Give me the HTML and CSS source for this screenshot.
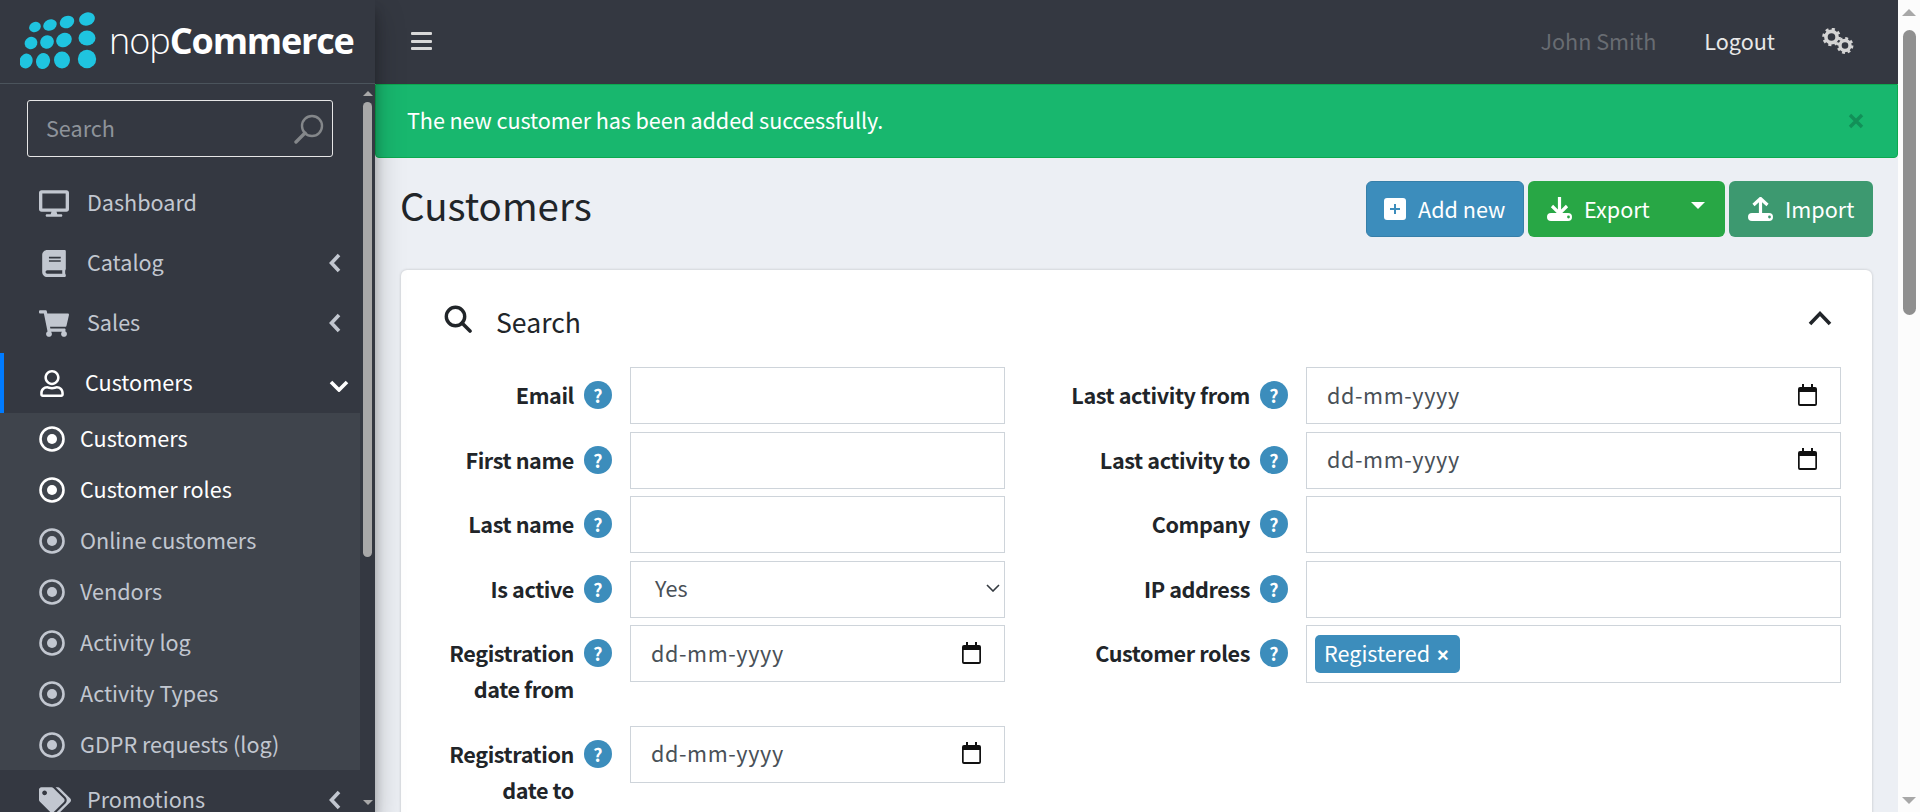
FILE: index.html
```html
<!DOCTYPE html>
<html lang="en">
<head>
    <meta charset="UTF-8">
    <title>Customers / nopCommerce administration</title>
    <link rel="stylesheet" href="styles.css">
</head>
<body>
    <div class="shell">
        <aside class="sidebar">
            <a class="logo">
                <svg class="logo-dots" viewBox="0 0 80 60" width="80" height="60">
                    <g fill="#1fc4e0">
                        <ellipse cx="15" cy="15" rx="6" ry="5" transform="rotate(-25 15 15)"/>
                        <ellipse cx="30" cy="13" rx="7" ry="5.5" transform="rotate(-25 30 13)"/>
                        <ellipse cx="47" cy="10" rx="7.5" ry="6" transform="rotate(-25 47 10)"/>
                        <ellipse cx="67" cy="7" rx="8" ry="6.5" transform="rotate(-20 67 7)"/>
                        <ellipse cx="11" cy="31" rx="6.5" ry="6" transform="rotate(-30 11 31)"/>
                        <ellipse cx="27" cy="30" rx="7" ry="6.5" transform="rotate(-30 27 30)"/>
                        <ellipse cx="44" cy="28" rx="8" ry="7" transform="rotate(-25 44 28)"/>
                        <ellipse cx="67" cy="26" rx="8.5" ry="7.5"/>
                        <ellipse cx="6" cy="49" rx="6.5" ry="7.5" transform="rotate(20 6 49)"/>
                        <ellipse cx="23" cy="49" rx="7" ry="8" transform="rotate(15 23 49)"/>
                        <ellipse cx="42" cy="48" rx="8" ry="8.5"/>
                        <circle cx="67" cy="47" r="9.2"/>
                    </g>
                </svg>
                <span class="logo-text"><span class="logo-light">nop</span><span class="logo-bold">Commerce</span></span>
            </a>
            <div class="sidebar-body">
                <nav class="sidebar-nav">
                    <div class="sidebar-search">
                        <input class="sidebar-input" placeholder="Search" />
                        <svg class="sidebar-lens" viewBox="0 0 30 30" width="30" height="30"><circle cx="18" cy="12" r="10" fill="none" stroke="currentColor" stroke-width="2.4"/><path d="M11 19 2 28" stroke="currentColor" stroke-width="3.4" stroke-linecap="round"/></svg>
                    </div>
                    <ul class="menu">
                        <li class="menu-item">
                            <svg class="menu-icon" viewBox="0 0 576 512"><path d="M528 0H48C21.5 0 0 21.5 0 48v320c0 26.5 21.5 48 48 48h192l-16 48h-72c-13.3 0-24 10.7-24 24s10.7 24 24 24h272c13.3 0 24-10.7 24-24s-10.7-24-24-24h-72l-16-48h192c26.5 0 48-21.5 48-48V48c0-26.5-21.5-48-48-48zm-16 352H64V64h448v288z"/></svg>
                            <span>Dashboard</span>
                        </li>
                        <li class="menu-item">
                            <svg class="menu-icon" viewBox="0 0 448 512"><path d="M448 360V24c0-13.3-10.7-24-24-24H96C43 0 0 43 0 96v320c0 53 43 96 96 96h328c13.3 0 24-10.7 24-24v-16c0-7.5-3.5-14.3-8.9-18.7-4.2-15.4-4.2-59.3 0-74.7 5.4-4.3 8.9-11.1 8.9-18.6zM128 134c0-3.3 2.7-6 6-6h212c3.3 0 6 2.7 6 6v20c0 3.3-2.7 6-6 6H134c-3.3 0-6-2.7-6-6v-20zm0 64c0-3.3 2.7-6 6-6h212c3.3 0 6 2.7 6 6v20c0 3.3-2.7 6-6 6H134c-3.3 0-6-2.7-6-6v-20zm253.4 250H96c-17.7 0-32-14.3-32-32 0-17.6 14.4-32 32-32h285.4c-1.9 17.1-1.9 46.9 0 64z"/></svg>
                            <span>Catalog</span>
                            <svg class="menu-angle" viewBox="0 0 12 20"><path d="M10 2 2.5 10 10 18"/></svg>
                        </li>
                        <li class="menu-item">
                            <svg class="menu-icon" viewBox="0 0 576 512"><path d="M528.12 301.319l47.273-208C578.806 78.301 567.391 64 551.99 64H159.208l-9.166-44.81C147.758 8.021 137.93 0 126.529 0H24C10.745 0 0 10.745 0 24v16c0 13.255 10.745 24 24 24h69.883l70.248 343.435C147.325 417.1 136 435.222 136 456c0 30.928 25.072 56 56 56s56-25.072 56-56c0-15.674-6.447-29.835-16.824-40h209.647C430.447 426.165 424 440.326 424 456c0 30.928 25.072 56 56 56s56-25.072 56-56c0-22.172-12.888-41.332-31.579-50.405l5.517-24.276c3.413-15.018-8.002-29.319-23.403-29.319H218.117l-6.545-32h293.145c11.206 0 20.92-7.754 23.403-18.681z"/></svg>
                            <span>Sales</span>
                            <svg class="menu-angle" viewBox="0 0 12 20"><path d="M10 2 2.5 10 10 18"/></svg>
                        </li>
                        <li class="menu-item active">
                            <svg class="menu-icon user-icon" viewBox="0 0 448 512"><path d="M313.6 304c-28.7 0-42.5 16-89.6 16-47.1 0-60.8-16-89.6-16C60.2 304 0 364.2 0 438.4V464c0 26.5 21.5 48 48 48h352c26.5 0 48-21.5 48-48v-25.6c0-74.2-60.2-134.4-134.4-134.4zM400 464H48v-25.6c0-47.6 38.8-86.4 86.4-86.4 14.6 0 38.3 16 89.6 16 51.7 0 74.9-16 89.6-16 47.6 0 86.4 38.8 86.4 86.4V464zM224 288c79.5 0 144-64.5 144-144S303.5 0 224 0 80 64.5 80 144s64.5 144 144 144zm0-240c52.9 0 96 43.1 96 96s-43.1 96-96 96-96-43.1-96-96 43.1-96 96-96z"/></svg>
                            <span>Customers</span>
                            <svg class="menu-angle-down" viewBox="0 0 20 12"><path d="M2 2 10 10 18 2"/></svg>
                        </li>
                        <li>
                            <ul class="submenu">
                                <li class="submenu-item current"><svg class="dot" viewBox="0 0 26 26"><circle cx="13" cy="13" r="11.5"/><circle class="dot-core" cx="13" cy="13" r="5"/></svg><span>Customers</span></li>
                                <li class="submenu-item current"><svg class="dot" viewBox="0 0 26 26"><circle cx="13" cy="13" r="11.5"/><circle class="dot-core" cx="13" cy="13" r="5"/></svg><span>Customer roles</span></li>
                                <li class="submenu-item"><svg class="dot" viewBox="0 0 26 26"><circle cx="13" cy="13" r="11.5"/><circle class="dot-core" cx="13" cy="13" r="5"/></svg><span>Online customers</span></li>
                                <li class="submenu-item"><svg class="dot" viewBox="0 0 26 26"><circle cx="13" cy="13" r="11.5"/><circle class="dot-core" cx="13" cy="13" r="5"/></svg><span>Vendors</span></li>
                                <li class="submenu-item"><svg class="dot" viewBox="0 0 26 26"><circle cx="13" cy="13" r="11.5"/><circle class="dot-core" cx="13" cy="13" r="5"/></svg><span>Activity log</span></li>
                                <li class="submenu-item"><svg class="dot" viewBox="0 0 26 26"><circle cx="13" cy="13" r="11.5"/><circle class="dot-core" cx="13" cy="13" r="5"/></svg><span>Activity Types</span></li>
                                <li class="submenu-item"><svg class="dot" viewBox="0 0 26 26"><circle cx="13" cy="13" r="11.5"/><circle class="dot-core" cx="13" cy="13" r="5"/></svg><span>GDPR requests (log)</span></li>
                            </ul>
                        </li>
                        <li class="menu-item">
                            <svg class="menu-icon tags-icon" viewBox="0 0 640 512"><path d="M497.941 225.941L286.059 14.059A48 48 0 0 0 252.118 0H48C21.49 0 0 21.49 0 48v204.118a48 48 0 0 0 14.059 33.941l211.882 211.882c18.744 18.745 49.136 18.746 67.882 0l204.118-204.118c18.745-18.745 18.745-49.137 0-67.882zM112 160c-26.51 0-48-21.49-48-48s21.49-48 48-48 48 21.49 48 48-21.49 48-48 48zm513.941 133.823L421.823 497.941c-18.745 18.745-49.137 18.745-67.882 0l-.36-.36L527.64 323.522c16.999-16.999 26.36-39.6 26.36-63.64s-9.362-46.641-26.36-63.64L331.397 0h48.721a48 48 0 0 1 33.941 14.059l211.882 211.882c18.745 18.745 18.745 49.137 0 67.882z"/></svg>
                            <span>Promotions</span>
                            <svg class="menu-angle" viewBox="0 0 12 20"><path d="M10 2 2.5 10 10 18"/></svg>
                        </li>
                    </ul>
                </nav>
                <div class="side-scroll">
                    <span class="arrow-up"></span>
                    <span class="side-thumb"></span>
                    <span class="arrow-down"></span>
                </div>
            </div>
        </aside>

        <div class="main">
            <header class="topbar">
                <div class="hamburger"><i></i><i></i><i></i></div>
                <div class="topbar-right">
                    <span class="user-name">John Smith</span>
                    <span class="logout">Logout</span>
                    <svg class="gears" viewBox="0 0 32 26" width="32" height="26">
                        <g fill="none" stroke="#d4d4d4">
                            <circle cx="9.5" cy="9" r="5.6" stroke-width="3.6"/>
                            <circle cx="9.5" cy="9" r="7.8" stroke-width="3" stroke-dasharray="3 3.13"/>
                            <circle cx="23" cy="17.5" r="5" stroke-width="3.4"/>
                            <circle cx="23" cy="17.5" r="7" stroke-width="2.8" stroke-dasharray="2.8 2.7"/>
                        </g>
                    </svg>
                </div>
            </header>

            <div class="alert">
                <span class="alert-text">The new customer has been added successfully.</span>
                <svg class="alert-close" viewBox="0 0 16 16" width="16" height="16"><path d="M2 2l12 12M14 2 2 14" fill="none" stroke="#129058" stroke-width="3.4"/></svg>
            </div>

            <section class="content">
                <div class="content-header">
                    <h1>Customers</h1>
                    <div class="actions">
                        <a class="btn btn-add">
                            <svg class="btn-icon" viewBox="0 0 22 22" width="22" height="22"><rect width="22" height="22" rx="3" fill="#fff"/><path d="M11 6v10M6 11h10" stroke="#3c8dbc" stroke-width="2"/></svg>
                            Add new
                        </a>
                        <a class="btn btn-export">
                            <svg class="btn-icon" viewBox="0 0 25 24" width="25" height="24"><path d="M12.5 0v15M5 9l7.5 7.5L20 9" fill="none" stroke="#fff" stroke-width="3.2"/><rect y="16" width="25" height="8" rx="4" fill="#fff"/><circle cx="21.5" cy="20" r="1.4" fill="#28a745"/></svg>
                            Export
                            <span class="caret"></span>
                        </a>
                        <a class="btn btn-import">
                            <svg class="btn-icon" viewBox="0 0 25 24" width="25" height="24"><path d="M12.5 2v16M5.5 8l7-6.5 7 6.5" fill="none" stroke="#fff" stroke-width="3.2"/><rect y="16" width="25" height="8" rx="4" fill="#fff"/><circle cx="21.5" cy="20" r="1.4" fill="#3d9970"/></svg>
                            Import
                        </a>
                    </div>
                </div>

                <div class="card">
                    <div class="card-title">
                        <svg class="card-lens" viewBox="0 0 28 28" width="28" height="28"><circle cx="11.5" cy="11.5" r="9.2" fill="none" stroke="#212529" stroke-width="3.4"/><path d="M18 18l8 8" stroke="#212529" stroke-width="3.6" stroke-linecap="round"/></svg>
                        <span class="card-name">Search</span>
                        <svg class="card-toggle" viewBox="0 0 24 16" width="24" height="16"><path d="M2 14 12 3.5 22 14" fill="none" stroke="#212529" stroke-width="3.6"/></svg>
                    </div>
                    <div class="search-form">
                        <div class="form-col left">
                            <div class="form-row"><label>Email</label><span class="help">?</span><input class="field" /></div>
                            <div class="form-row"><label>First name</label><span class="help">?</span><input class="field" /></div>
                            <div class="form-row"><label>Last name</label><span class="help">?</span><input class="field" /></div>
                            <div class="form-row"><label>Is active</label><span class="help">?</span>
                                <div class="field select-field">Yes<svg viewBox="0 0 14 8" width="14" height="8"><path d="M1 1l6 6 6-6" fill="none" stroke="#343a40" stroke-width="1.6"/></svg></div>
                            </div>
                            <div class="form-row"><label>Registration date from</label><span class="help">?</span>
                                <div class="field date-field">dd-mm-yyyy<svg class="cal" viewBox="0 0 19 22" width="19" height="22"><path d="M4 0h2v3h7V0h2v3h2a2 2 0 0 1 2 2v15a2 2 0 0 1-2 2H2a2 2 0 0 1-2-2V5a2 2 0 0 1 2-2h2zM1.7 8v12h15.6V8z"/></svg></div>
                            </div>
                            <div class="form-row"><label>Registration date to</label><span class="help">?</span>
                                <div class="field date-field">dd-mm-yyyy<svg class="cal" viewBox="0 0 19 22" width="19" height="22"><path d="M4 0h2v3h7V0h2v3h2a2 2 0 0 1 2 2v15a2 2 0 0 1-2 2H2a2 2 0 0 1-2-2V5a2 2 0 0 1 2-2h2zM1.7 8v12h15.6V8z"/></svg></div>
                            </div>
                        </div>
                        <div class="form-col right">
                            <div class="form-row"><label>Last activity from</label><span class="help">?</span>
                                <div class="field date-field">dd-mm-yyyy<svg class="cal" viewBox="0 0 19 22" width="19" height="22"><path d="M4 0h2v3h7V0h2v3h2a2 2 0 0 1 2 2v15a2 2 0 0 1-2 2H2a2 2 0 0 1-2-2V5a2 2 0 0 1 2-2h2zM1.7 8v12h15.6V8z"/></svg></div>
                            </div>
                            <div class="form-row"><label>Last activity to</label><span class="help">?</span>
                                <div class="field date-field">dd-mm-yyyy<svg class="cal" viewBox="0 0 19 22" width="19" height="22"><path d="M4 0h2v3h7V0h2v3h2a2 2 0 0 1 2 2v15a2 2 0 0 1-2 2H2a2 2 0 0 1-2-2V5a2 2 0 0 1 2-2h2zM1.7 8v12h15.6V8z"/></svg></div>
                            </div>
                            <div class="form-row"><label>Company</label><span class="help">?</span><input class="field" /></div>
                            <div class="form-row"><label>IP address</label><span class="help">?</span><input class="field" /></div>
                            <div class="form-row"><label>Customer roles</label><span class="help">?</span>
                                <div class="field tags-field"><span class="tag">Registered <b>×</b></span></div>
                            </div>
                        </div>
                    </div>
                </div>
            </section>
        </div>
    </div>

    <div class="page-scroll">
        <span class="arrow-up"></span>
        <span class="page-thumb"></span>
        <span class="arrow-down"></span>
    </div>
</body>
</html>
```

FILE: styles.css
```css
html, body { margin: 0; height: 812px; overflow: hidden; }
body { display: flex; font-family: "Noto Sans CJK SC", "Noto Sans", sans-serif; font-size: 21.6px; line-height: 36px; color: #212529; background: #fff; }
ul { list-style: none; margin: 0; padding: 0; }
h1 { margin: 0 0 0 -1px; font-size: 38.5px; font-weight: 400; line-height: 46px; }
svg { flex: none; display: block; }

.shell { flex: 1; display: flex; min-width: 0; height: 812px; }

/* sidebar */
.sidebar { flex: none; width: 375px; display: flex; flex-direction: column; background: #343841; box-shadow: 0 14px 28px rgba(0, 0, 0, .25), 0 10px 10px rgba(0, 0, 0, .22); position: relative; z-index: 3; }
.logo { flex: none; height: 84px; box-sizing: border-box; border-bottom: 1px solid #4b545c; display: flex; align-items: center; padding-left: 20px; }
.logo-dots { margin-top: 1px; }
.logo-text { margin-left: 9px; margin-top: -2px; color: #fff; font-family: "Open Sans", sans-serif; font-size: 36px; letter-spacing: -1px; white-space: nowrap; }
.logo-light { font-weight: 300; }
.logo-bold { font-weight: 700; letter-spacing: -1.2px; }

.sidebar-body { flex: 1; display: flex; min-height: 0; overflow: hidden; }
.sidebar-nav { width: 360px; flex: none; }
.sidebar-search { margin: 16px 27px 16px 27px; width: 306px; height: 57px; position: relative; }
.sidebar-input { width: 100%; height: 100%; box-sizing: border-box; padding: 0 60px 2px 18px; background: transparent; border: 1px solid #e6e6e6; border-radius: 3px; font: inherit; color: #fff; outline: none; }
.sidebar-input::placeholder { color: #8e939a; opacity: 1; }
.sidebar-lens { position: absolute; top: 14px; right: 9px; color: #84878a; }

.menu-item { height: 60px; display: flex; align-items: center; padding-left: 39px; color: #c2c7d0; fill: #c2c7d0; box-sizing: border-box; }
.menu-item span { flex: 1; margin-left: 18px; padding-bottom: 2px; }
.menu-icon { width: 30px; height: 27px; }
.menu-angle { width: 12px; height: 20px; margin-right: 19px; fill: none; stroke: #c2c7d0; stroke-width: 3.6; }
.menu-item.active { color: #fff; fill: #fff; border-left: 4px solid #007bff; padding-left: 36px; }
.menu-item.active span { margin-left: 16px; }
.user-icon { width: 24px; height: 27px; margin-left: 0; margin-right: 5px; }
.tags-icon { width: 32px; height: 26px; margin-right: -2px; }
.menu-angle-down { width: 20px; height: 12px; margin-right: 11px; margin-top: 6px; fill: none; stroke: #fff; stroke-width: 3.6; }

.submenu { background: #3f444c; }
.submenu-item { height: 51px; display: flex; align-items: center; padding-left: 39px; color: #c2c7d0; }
.submenu-item span { padding-bottom: 2px; }
.submenu-item.current { color: #fff; }
.dot { width: 26px; height: 26px; margin-right: 15px; fill: none; stroke: currentColor; stroke-width: 2.6; }
.dot-core { fill: currentColor; stroke: none; }

.side-scroll { flex: 1; position: relative; display: flex; flex-direction: column; align-items: center; padding-top: 7px; box-sizing: border-box; height: 100%; }
.side-thumb { display: block; width: 9px; height: 455px; margin-top: 6px; background: #a8a8a8; border-radius: 5px; }
.side-scroll .arrow-down { margin-top: auto; margin-bottom: 7px; }
.arrow-up { display: block; width: 0; height: 0; border: 5px solid transparent; border-top: 0; border-bottom-color: #a8a8a8; }
.arrow-down { display: block; width: 0; height: 0; border: 5px solid transparent; border-bottom: 0; border-top-color: #a8a8a8; }

/* main column */
.main { flex: 1; min-width: 0; display: flex; flex-direction: column; background: #eceff4; overflow: hidden; }
.topbar { flex: none; height: 84px; display: flex; align-items: center; justify-content: space-between; background: #343841; padding-left: 36px; padding-right: 44px; }
.hamburger { width: 21px; display: flex; flex-direction: column; gap: 4.5px; margin-top: -2px; }
.hamburger i { display: block; height: 3px; background: #d8d8d8; border-radius: 1px; }
.topbar-right { display: flex; align-items: center; }
.topbar-right span { padding-bottom: 2px; }
.user-name { color: #686c72; }
.logout { color: #e8e8e8; margin-left: 48px; }
.gears { margin-left: 47px; margin-top: -2px; }

.alert { flex: none; height: 74px; box-sizing: border-box; display: flex; align-items: center; justify-content: space-between; padding: 0 33px 0 31px; background: #18b76e; border: 1px solid #0ca94f; border-radius: 0 0 4px 4px; color: #fff; }
.alert-text { padding-bottom: 2px; letter-spacing: -.08px; }

.content { flex: 1; padding: 23px 25px 0 26px; min-height: 0; }
.content-header { display: flex; justify-content: space-between; align-items: flex-start; margin-bottom: 33px; }
.actions { display: flex; gap: 4px; }
.btn { height: 56px; box-sizing: border-box; display: flex; align-items: center; border-radius: 6px; color: #fff; }
.btn-add { background: #3c8dbc; border: 1px solid #367fa9; width: 158px; padding-left: 17px; }
.btn-export { background: #28a745; width: 197px; padding-left: 19px; }
.btn-import { background: #3d9970; width: 144px; padding-left: 19px; }
.btn-add .btn-icon { margin-right: 12px; }
.btn-export .btn-icon, .btn-import .btn-icon { margin-right: 12px; }
.caret { width: 0; height: 0; margin-left: auto; margin-right: 20px; margin-top: -8px; border: 7px solid transparent; border-bottom: 0; border-top-color: #fff; }

.card { background: #fff; border-radius: 6px; box-shadow: 0 0 3px rgba(0, 0, 0, .2); margin-right: 1px; padding: 0 26px 0 23px; height: 600px; }
.card-title { height: 97px; display: flex; align-items: center; padding-left: 20px; padding-right: 14px; }
.card-lens { margin-top: 0; }
.card-name { flex: 1; margin-left: 24px; font-size: 26.6px; padding-top: 6px; }
.card-toggle { margin-top: -2px; }

.search-form { display: flex; gap: 25px; }
.form-row { display: flex; align-items: flex-start; margin-bottom: 7.5px; }
.form-row label { flex: none; padding: 10px 0 11px; text-align: right; font-weight: 700; letter-spacing: -.4px; box-sizing: border-box; }
.left .form-row label { width: 150px; }
.right .form-row label { width: 220px; }
.help { flex: none; width: 28px; height: 28px; margin: 14px 18px 0 10px; border-radius: 50%; background: #3c8dbc; color: #fff; font-size: 18px; font-weight: 700; line-height: 28px; text-align: center; }
.field { flex: none; height: 57px; box-sizing: border-box; border: 1px solid #ced4da; background: #fff; font: inherit; color: #495057; padding: 0 20px 2px; display: flex; align-items: center; justify-content: space-between; outline: none; }
.left .field { width: 375px; }
.right .field { width: 535px; }
.select-field { padding-left: 24px; padding-right: 4px; }
.date-field { padding-right: 23px; letter-spacing: .6px; }
.cal { fill: #111; }
.tags-field { padding: 0 8px; justify-content: flex-start; height: 58px; }
.tag { display: block; height: 38px; line-height: 36px; padding: 0 11px 0 9px; background: #3c8dbc; color: #fff; border-radius: 5px; white-space: nowrap; }
.tag b { font-family: "Liberation Sans", sans-serif; font-size: 20px; margin-left: 2px; }

/* page scrollbar */
.page-scroll { flex: none; width: 22px; height: 812px; box-sizing: border-box; background: #fcfcfc; display: flex; flex-direction: column; align-items: center; padding-top: 9px; }
.page-scroll .arrow-up { border-width: 7px; border-top: 0; }
.page-thumb { display: block; width: 13px; height: 285px; margin-top: 14px; background: #8f8f8f; border-radius: 7px; }
.page-scroll .arrow-down { margin-top: auto; margin-bottom: 8px; border-width: 7px; border-bottom: 0; }
```
